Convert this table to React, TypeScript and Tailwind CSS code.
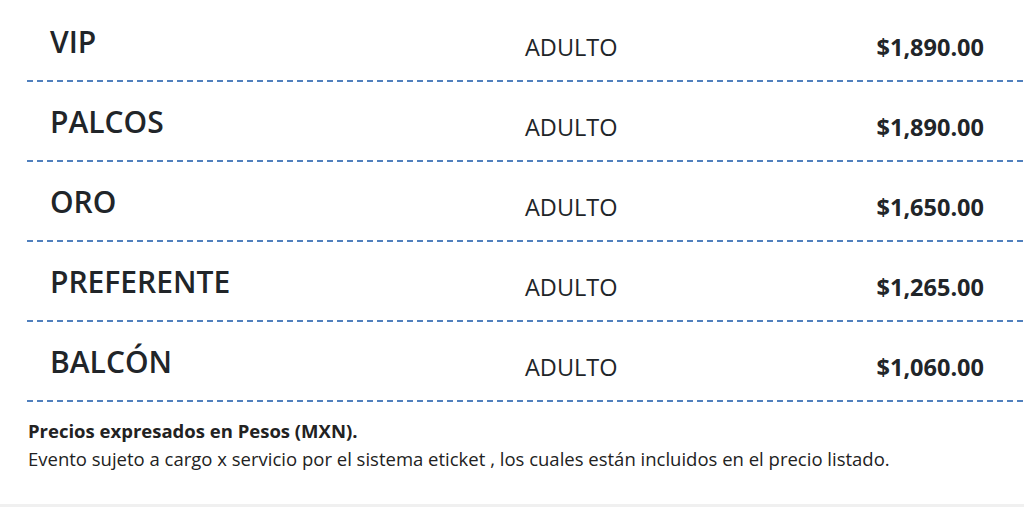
const rows = [
  { name: "VIP", type: "ADULTO", price: "$1,890.00" },
  { name: "PALCOS", type: "ADULTO", price: "$1,890.00" },
  { name: "ORO", type: "ADULTO", price: "$1,650.00" },
  { name: "PREFERENTE", type: "ADULTO", price: "$1,265.00" },
  { name: "BALCÓN", type: "ADULTO", price: "$1,060.00" },
];

export default function App() {
  return (
    <div className="flex h-[507px] w-[1024px] flex-col overflow-hidden bg-white font-['Open_Sans',sans-serif] text-[#212529]">
      <div className="pl-[27px] pt-[2px]">
        {rows.map((r) => (
          <div key={r.name}>
            <div className="grid h-[78px] grid-cols-[475px_1fr_auto] items-start pl-[23px] pr-[40px]">
              <span className="mt-[22px] text-[30px] font-semibold leading-[36px]">{r.name}</span>
              <span className="mt-[30px] text-[23.5px] leading-[30px]">{r.type}</span>
              <span className="mt-[30px] text-[23.5px] font-bold leading-[30px]">{r.price}</span>
            </div>
            <div className="h-[2px] bg-[repeating-linear-gradient(90deg,#3d72b6_0px,#3d72b6_6px,#ffffff_6px,#ffffff_10px)] opacity-90" />
          </div>
        ))}
      </div>
      <div className="flex-1 pl-[28px] pt-[15px] text-[18.5px] leading-[28px] text-[#222]">
        <p className="font-bold">Precios expresados en Pesos (MXN).</p>
        <p>Evento sujeto a cargo x servicio por el sistema eticket , los cuales están incluidos en el precio listado.</p>
      </div>
      <div className="h-[3px] bg-[#f0f0f0]" />
    </div>
  );
}
